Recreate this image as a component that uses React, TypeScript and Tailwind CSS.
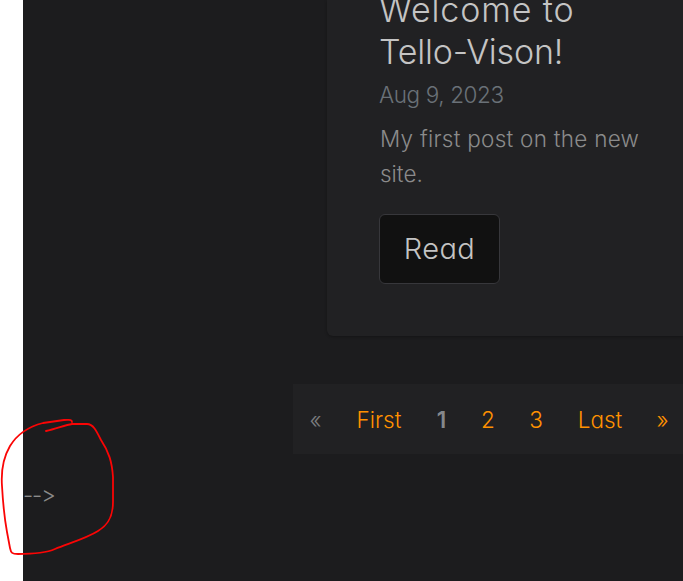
const pages = [
  { label: '«', cell: 'w-[45px] text-[#7b7c7e]' },
  { label: 'First', cell: 'w-[82px] text-[#ff9100]' },
  { label: '1', cell: 'w-[43px] text-[#85888c] font-semibold' },
  { label: '2', cell: 'w-[50px] text-[#ff9100]' },
  { label: '3', cell: 'w-[46px] text-[#ff9100]' },
  { label: 'Last', cell: 'w-[82px] text-[#ff9100]' },
  { label: '»', cell: 'w-[43px] text-[#ff9100]' },
];

function PostCard() {
  return (
    <article className="ml-[304px] h-[336px] overflow-hidden rounded-bl-md bg-[#212123] pl-[53px] shadow-[0_1px_3px_rgba(0,0,0,0.3)]">
      <h2 className="-ml-px -mt-[11px] text-[34px] leading-[42px] text-[#c4c4c4]">
        <span className="block tracking-[0.85px]">Welcome to</span>
        <span className="block tracking-[-0.2px]">Tello-Vison!</span>
      </h2>
      <p className="-ml-px mt-[4px] text-[22.5px] leading-[35px] tracking-[-0.4px] text-[#6a7178]">Aug 9, 2023</p>
      <p className="mt-[9px] text-[22.5px] leading-[35px] text-[#8b8b8b]">
        <span className="block tracking-[0.26px]">My first post on the new</span>
        <span className="block">site.</span>
      </p>
      <button className="-ml-px mt-[23px] flex h-[70px] w-[121px] items-center justify-center rounded-md border border-[#37373b] bg-[#111111] text-[29px] font-light tracking-[0.4px] text-[#c4c4c4]">
        Read
      </button>
    </article>
  );
}

function Pagination() {
  return (
    <nav className="ml-[270px] mt-12 flex h-[70px] bg-[#212123] text-[22.5px] leading-[72px]">
      {pages.map(({ label, cell }) => (
        <a key={label} className={`shrink-0 text-center ${cell}`}>{label}</a>
      ))}
    </nav>
  );
}

export default function App() {
  return (
    <div className="relative h-[581px] w-[683px] overflow-hidden bg-white pl-[23px] font-['Inter',sans-serif] font-light [font-feature-settings:'cv11','calt'_0]">
      <main className="h-[581px] overflow-hidden bg-[#1c1c1e]">
        <PostCard />
        <Pagination />
        <p className="mt-[23px] text-[22.5px] leading-[35px] tracking-[-1.1px] text-[#8b8b8b]">--&gt;</p>
      </main>
      <svg className="absolute left-0 top-0" width="683" height="581" fill="none" stroke="#fa0505" strokeWidth="1.8" strokeLinecap="round" strokeLinejoin="round">
        <path d="M72 422 C72 419 69 420 64 420 L43 423 C31 426 18 433 10 446 C3 458 1 472 2 486 C3 504 5 521 7 532 L10 548 C11 553 12 554 18 554 C33 554 46 553 55 549 C70 543 87 538 98 531 C110 524 113 514 113 502 L113 477 C112 462 109 452 101 440 C96 430 93 424 87 424 L72 424 C65 425 56 429 46 431" />
      </svg>
    </div>
  );
}
